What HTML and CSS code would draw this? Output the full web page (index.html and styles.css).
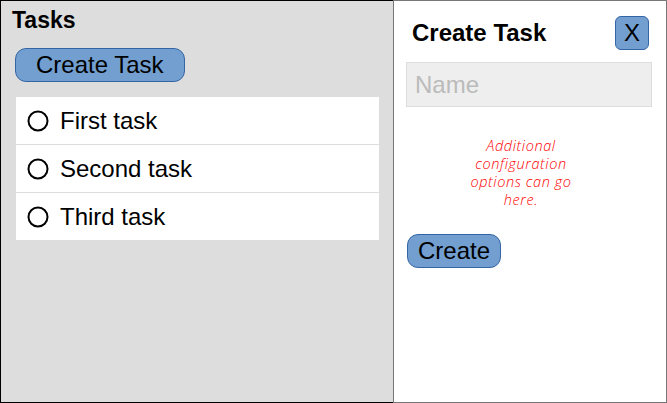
FILE: index.html
```html
<!DOCTYPE html>
<html>
<head>
<meta charset="utf-8">
<link rel="stylesheet" href="styles.css">
</head>
<body>
<div class="app">
  <section class="tasks">
    <h1 class="tasks-title">Tasks</h1>
    <button class="btn btn-create-task">Create Task</button>
    <ul class="task-list">
      <li class="task-row">
        <svg class="task-check" width="22" height="22" viewBox="0 0 22 22"><circle cx="11" cy="11" r="9.5" fill="none" stroke="#000" stroke-width="2"/></svg>
        <span class="task-name">First task</span>
      </li>
      <li class="task-row">
        <svg class="task-check" width="22" height="22" viewBox="0 0 22 22"><circle cx="11" cy="11" r="9.5" fill="none" stroke="#000" stroke-width="2"/></svg>
        <span class="task-name">Second task</span>
      </li>
      <li class="task-row">
        <svg class="task-check" width="22" height="22" viewBox="0 0 22 22"><circle cx="11" cy="11" r="9.5" fill="none" stroke="#000" stroke-width="2"/></svg>
        <span class="task-name">Third task</span>
      </li>
    </ul>
  </section>
  <aside class="dialog">
    <div class="dialog-header">
      <h2 class="dialog-title">Create Task</h2>
      <button class="btn btn-close">X</button>
    </div>
    <input class="name-input" type="text" placeholder="Name">
    <p class="note">Additional<br>configuration<br>options can go<br>here.</p>
    <button class="btn btn-create">Create</button>
  </aside>
</div>
</body>
</html>
```

FILE: styles.css
```css
html, body {
  margin: 0;
  padding: 0;
  background: #fff;
}

body {
  font-family: "Liberation Sans", Arial, sans-serif;
  color: #000;
}

.app {
  display: flex;
  width: 667px;
  height: 403px;
}

.tasks {
  box-sizing: border-box;
  flex: none;
  width: 393px;
  height: 403px;
  background: #ddd;
  border: 1px solid #000;
  border-right: none;
  padding: 6px 13px 0 11px;
  display: flex;
  flex-direction: column;
  align-items: flex-start;
}

.tasks-title {
  margin: 0;
  font-size: 23px;
  line-height: 26px;
  font-weight: bold;
}

.btn {
  font-family: "Liberation Sans", Arial, sans-serif;
  font-size: 24px;
  color: #000;
  background: #729fcf;
  border: 1px solid #3465a4;
  cursor: pointer;
}

.btn-create-task {
  margin: 15px 0 0 3px;
  height: 34px;
  line-height: 30px;
  padding: 0 20px;
  border-radius: 11px;
}

.task-list {
  list-style: none;
  margin: 15px 0 0 4px;
  padding: 0;
  width: 363px;
  background: #fff;
}

.task-row {
  display: flex;
  align-items: center;
  gap: 11px;
  height: 47px;
  padding-left: 12px;
  border-bottom: 1px solid #ddd;
  font-size: 24px;
}

.task-row:last-child {
  border-bottom: none;
}

.task-check {
  display: block;
  flex: none;
  margin-left: -1px;
}

.dialog {
  box-sizing: border-box;
  flex: none;
  width: 274px;
  min-width: 0;
  height: 403px;
  border: 1px solid #777;
  padding: 15px 14px 0 12px;
  display: flex;
  flex-direction: column;
  align-items: flex-start;
}

.dialog-header {
  align-self: stretch;
  display: flex;
  align-items: center;
  justify-content: space-between;
  padding: 0 3px 0 6px;
  margin-bottom: 12px;
}

.dialog-title {
  margin: 0;
  font-size: 24px;
  line-height: 28px;
  font-weight: bold;
}

.btn-close {
  box-sizing: border-box;
  width: 34px;
  height: 34px;
  padding: 0;
  border-radius: 6px;
  line-height: 30px;
}

.name-input {
  box-sizing: border-box;
  align-self: stretch;
  width: 100%;
  min-width: 0;
  height: 45px;
  margin: 0;
  padding: 0 8px;
  background: #eee;
  border: 1px solid #ddd;
  font-family: "Liberation Sans", Arial, sans-serif;
  font-size: 24px;
  color: #000;
  outline: none;
}

.name-input::placeholder {
  color: #bbb;
}

.note {
  align-self: stretch;
  margin: 30px 16px 0 0;
  text-align: center;
  color: #f00;
  font-family: "Open Sans", "DejaVu Sans", sans-serif;
  font-style: italic;
  font-weight: 300;
  font-size: 14.5px;
  letter-spacing: 0.6px;
  line-height: 18px;
}

.btn-create {
  margin: 25px 0 0 1px;
  height: 34px;
  line-height: 30px;
  padding: 0 10px;
  border-radius: 11px;
}
```
